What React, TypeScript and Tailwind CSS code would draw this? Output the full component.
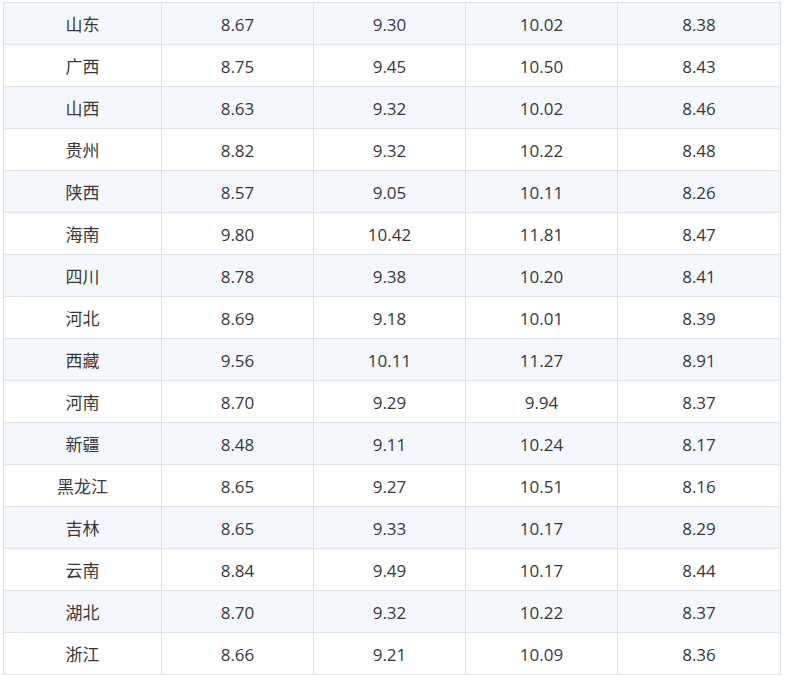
const rows: [string, string, string, string, string][] = [
  ['山东', '8.67', '9.30', '10.02', '8.38'],
  ['广西', '8.75', '9.45', '10.50', '8.43'],
  ['山西', '8.63', '9.32', '10.02', '8.46'],
  ['贵州', '8.82', '9.32', '10.22', '8.48'],
  ['陕西', '8.57', '9.05', '10.11', '8.26'],
  ['海南', '9.80', '10.42', '11.81', '8.47'],
  ['四川', '8.78', '9.38', '10.20', '8.41'],
  ['河北', '8.69', '9.18', '10.01', '8.39'],
  ['西藏', '9.56', '10.11', '11.27', '8.91'],
  ['河南', '8.70', '9.29', '9.94', '8.37'],
  ['新疆', '8.48', '9.11', '10.24', '8.17'],
  ['黑龙江', '8.65', '9.27', '10.51', '8.16'],
  ['吉林', '8.65', '9.33', '10.17', '8.29'],
  ['云南', '8.84', '9.49', '10.17', '8.44'],
  ['湖北', '8.70', '9.32', '10.22', '8.37'],
  ['浙江', '8.66', '9.21', '10.09', '8.36'],
]

const widths = ['w-[158px]', 'w-[152px]', 'w-[152px]', 'w-[152px]', 'w-[163px]']

export default function App() {
  return (
    <div className="min-h-screen bg-white pt-[2px] pl-[3px]">
      <table
        className="border-collapse table-fixed w-[778px] text-[17px] text-[#383838]"
        style={{ fontFamily: '"Open Sans", "Noto Sans CJK SC", sans-serif' }}
      >
        <colgroup>
          {widths.map((w, i) => (
            <col key={i} className={w} />
          ))}
        </colgroup>
        <tbody>
          {rows.map((r, i) => (
            <tr key={r[0]} className={i % 2 === 0 ? 'bg-[#f4f8fc]' : 'bg-white'}>
              {r.map((c, j) => (
                <td
                  key={j}
                  className="h-[42px] p-0 pt-[3px] text-center align-middle border border-[#dde1e6]"
                >
                  {c}
                </td>
              ))}
            </tr>
          ))}
        </tbody>
      </table>
    </div>
  )
}
